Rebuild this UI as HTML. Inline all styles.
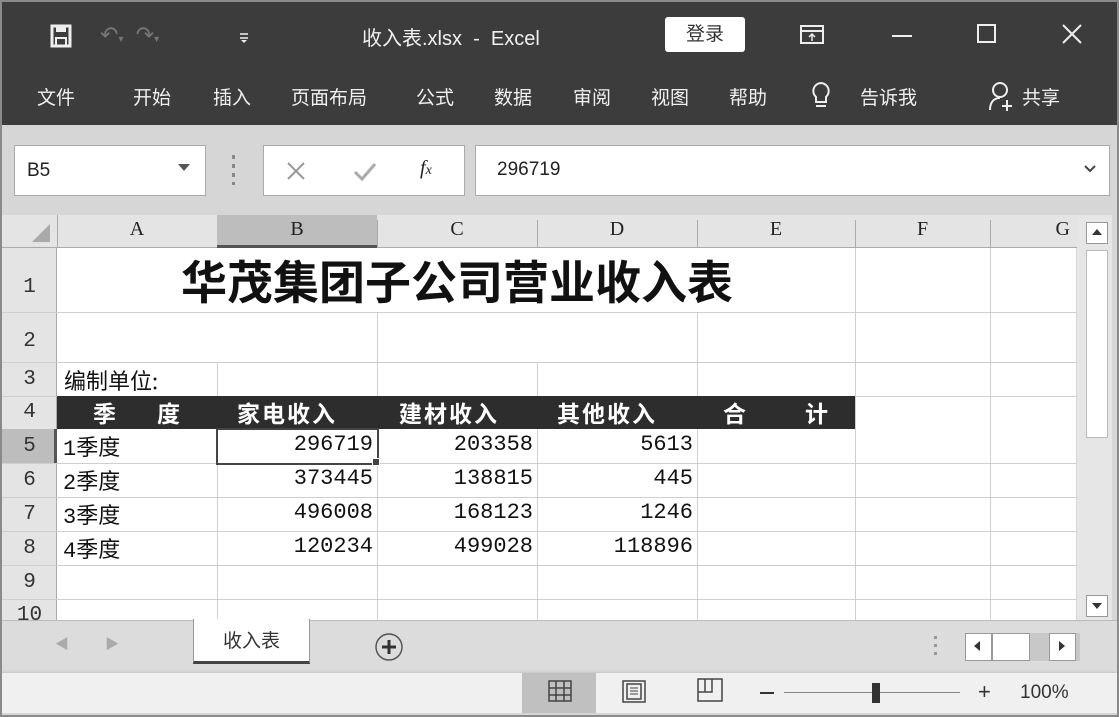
<!DOCTYPE html>
<html><head><meta charset="utf-8"><style>
*{margin:0;padding:0;box-sizing:border-box}
body{width:1119px;height:717px;overflow:hidden;background:#d6d6d6;font-family:"Liberation Sans","Noto Sans CJK SC",sans-serif;position:relative}
.a{position:absolute}
.t{color:#f0f0f0;font-size:19px}
.cell{position:absolute;font-family:"Liberation Mono","Noto Sans CJK SC",monospace;font-size:22px;color:#111}
.vl{position:absolute;width:1px;background:#cfcfcf}
.hl{position:absolute;height:1px;background:#cfcfcf}
.rh{position:absolute;left:2px;width:55px;text-align:center;font-family:"Liberation Mono",monospace;font-size:21px;color:#333}
.ch{position:absolute;top:218px;text-align:center;font-family:"Liberation Serif",serif;font-size:20px;color:#222}
</style></head><body>
<div class="a" style="left:0;top:0;width:1119px;height:717px;border:2px solid #8a8a8a"></div>
<div class="a" style="left:2px;top:2px;width:1115px;height:123px;background:#3c3c3c"></div>
<!-- title row -->
<svg class="a" style="left:50px;top:24px" width="22" height="24"><rect x="2" y="2" width="18" height="20" fill="none" stroke="#eee" stroke-width="3"/><rect x="6" y="14" width="10" height="8" fill="none" stroke="#eee" stroke-width="2"/><rect x="6" y="2" width="10" height="6" fill="#eee"/></svg>
<div class="a t" style="left:100px;top:22px;color:#777;font-size:22px">↶<span style="font-size:10px">▾</span>&nbsp;&nbsp;↷<span style="font-size:10px">▾</span></div>
<svg class="a" style="left:238px;top:30px" width="12" height="14"><path d="M2 4h8M2 8h8" stroke="#eee" stroke-width="1.5"/><path d="M3 10l3 3 3-3z" fill="#eee"/></svg>
<div class="a t" style="left:362px;top:22px;font-size:20px">收入表.xlsx&nbsp; - &nbsp;Excel</div>
<div class="a" style="left:665px;top:17px;width:80px;height:35px;background:#fff;border-radius:3px;text-align:center;font-size:19px;line-height:35px;color:#333">登录</div>
<svg class="a" style="left:800px;top:25px" width="24" height="20"><rect x="1" y="1" width="22" height="17" fill="none" stroke="#eee" stroke-width="2"/><line x1="1" y1="6" x2="23" y2="6" stroke="#eee" stroke-width="2"/><path d="M12 9v7M9 12l3-3 3 3" stroke="#eee" fill="none" stroke-width="1.5"/></svg>
<div class="a" style="left:892px;top:35px;width:20px;height:2px;background:#eee"></div>
<div class="a" style="left:977px;top:24px;width:19px;height:19px;border:2px solid #eee"></div>
<svg class="a" style="left:1062px;top:24px" width="20" height="20"><path d="M1 1L19 19M19 1L1 19" stroke="#eee" stroke-width="2"/></svg>
<!-- tabs -->
<div class="a t" style="left:37px;top:83px">文件</div>
<div class="a t" style="left:133px;top:83px">开始</div>
<div class="a t" style="left:213px;top:83px">插入</div>
<div class="a t" style="left:291px;top:83px">页面布局</div>
<div class="a t" style="left:416px;top:83px">公式</div>
<div class="a t" style="left:494px;top:83px">数据</div>
<div class="a t" style="left:573px;top:83px">审阅</div>
<div class="a t" style="left:651px;top:83px">视图</div>
<div class="a t" style="left:729px;top:83px">帮助</div>
<svg class="a" style="left:810px;top:80px" width="22" height="32"><path d="M11 3a8 8 0 0 0-5 14v5h10v-5a8 8 0 0 0-5-14z" fill="none" stroke="#eee" stroke-width="2"/><line x1="6" y1="26" x2="16" y2="26" stroke="#eee" stroke-width="2"/></svg>
<div class="a t" style="left:860px;top:83px">告诉我</div>
<svg class="a" style="left:988px;top:80px" width="28" height="32"><circle cx="12" cy="10" r="7" fill="none" stroke="#eee" stroke-width="2"/><path d="M2 30c0-8 4-12 10-12" fill="none" stroke="#eee" stroke-width="2"/><path d="M19 20v11M14 26h10" stroke="#eee" stroke-width="2"/></svg>
<div class="a t" style="left:1022px;top:83px">共享</div>
<!-- formula bar -->
<div class="a" style="left:14px;top:145px;width:192px;height:51px;background:#fff;border:1px solid #aaa"></div>
<div class="a" style="left:27px;top:160px;font-size:19px;color:#222">B5</div>
<div class="a" style="left:178px;top:164px;width:0;height:0;border-left:6px solid transparent;border-right:6px solid transparent;border-top:7px solid #555"></div>
<div class="a" style="left:232px;top:155px;width:3px;height:30px;background:repeating-linear-gradient(#888 0 4px,transparent 4px 9px)"></div>
<div class="a" style="left:263px;top:145px;width:202px;height:51px;background:#fff;border:1px solid #aaa"></div>
<svg class="a" style="left:285px;top:160px" width="22" height="22"><path d="M3 3L19 19M19 3L3 19" stroke="#999" stroke-width="2"/></svg>
<svg class="a" style="left:352px;top:160px" width="26" height="22"><path d="M3 12l7 7L23 4" stroke="#aaa" stroke-width="3" fill="none"/></svg>
<div class="a" style="left:420px;top:157px;font-family:'Liberation Serif',serif;font-style:italic;font-size:20px;color:#222">f<span style="font-size:14px">x</span></div>
<div class="a" style="left:475px;top:145px;width:635px;height:51px;background:#fff;border:1px solid #aaa"></div>
<div class="a" style="left:497px;top:159px;font-size:19px;color:#222">296719</div>
<svg class="a" style="left:1084px;top:165px" width="12" height="8"><path d="M1 1l5 5 5-5" stroke="#444" stroke-width="2" fill="none"/></svg>
<!-- grid -->
<div class="a" style="left:57px;top:248px;width:1019px;height:372px;background:#fff"></div>
<div class="a" style="left:2px;top:215px;width:1075px;height:33px;background:#e4e4e4;border-bottom:1px solid #aaa"></div>
<div class="a" style="left:2px;top:248px;width:55px;height:372px;background:#e4e4e4;border-right:1px solid #aaa"></div>
<div class="a" style="left:217px;top:215px;width:160px;height:33px;background:#bdbdbd;border-bottom:3px solid #555"></div>
<div class="a" style="left:2px;top:429px;width:55px;height:34px;background:#bdbdbd;border-right:3px solid #555"></div>
<svg class="a" style="left:30px;top:222px" width="22" height="22"><path d="M20 2V20H2z" fill="#aaa"/></svg>
<div class="ch" style="left:57px;width:160px">A</div>
<div class="ch" style="left:217px;width:160px">B</div>
<div class="ch" style="left:377px;width:160px">C</div>
<div class="ch" style="left:537px;width:160px">D</div>
<div class="ch" style="left:697px;width:158px">E</div>
<div class="ch" style="left:855px;width:135px">F</div>
<div class="ch" style="left:990px;width:80px;text-align:right">G</div>
<div class="vl" style="left:57px;top:215px;height:33px;background:#aaa"></div>
<div class="vl" style="left:377px;top:220px;height:28px;background:#aaa"></div>
<div class="vl" style="left:537px;top:220px;height:28px;background:#aaa"></div>
<div class="vl" style="left:697px;top:220px;height:28px;background:#aaa"></div>
<div class="vl" style="left:855px;top:220px;height:28px;background:#aaa"></div>
<div class="vl" style="left:990px;top:220px;height:28px;background:#aaa"></div>
<div class="vl" style="left:217px;top:362px;height:258px"></div>
<div class="vl" style="left:377px;top:312px;height:308px"></div>
<div class="vl" style="left:537px;top:362px;height:258px"></div>
<div class="vl" style="left:697px;top:312px;height:308px"></div>
<div class="vl" style="left:855px;top:248px;height:372px"></div>
<div class="vl" style="left:990px;top:248px;height:372px"></div>
<div class="hl" style="left:2px;top:312px;width:1075px"></div>
<div class="hl" style="left:2px;top:362px;width:1075px"></div>
<div class="hl" style="left:2px;top:396px;width:1075px"></div>
<div class="hl" style="left:2px;top:463px;width:1075px"></div>
<div class="hl" style="left:2px;top:497px;width:1075px"></div>
<div class="hl" style="left:2px;top:531px;width:1075px"></div>
<div class="hl" style="left:2px;top:565px;width:1075px"></div>
<div class="hl" style="left:2px;top:599px;width:1075px"></div>
<div class="rh" style="top:276px">1</div>
<div class="rh" style="top:330px">2</div>
<div class="rh" style="top:368px">3</div>
<div class="rh" style="top:401px">4</div>
<div class="rh" style="top:435px">5</div>
<div class="rh" style="top:469px">6</div>
<div class="rh" style="top:503px">7</div>
<div class="rh" style="top:537px">8</div>
<div class="rh" style="top:571px">9</div>
<div class="rh" style="top:604px;height:16px;overflow:hidden">10</div>
<!-- title -->
<div class="a" style="left:57px;top:252px;width:800px;text-align:center;font-family:'Noto Sans CJK SC',sans-serif;font-weight:bold;font-size:46px;line-height:56px;color:#111">华茂集团子公司营业收入表</div>
<div class="cell" style="left:64px;top:364px;font-family:'Noto Sans CJK SC',sans-serif">编制单位:</div>
<!-- header row -->
<div class="a" style="left:57px;top:396px;width:798px;height:33px;background:#2d2d2d"></div>
<div class="a" style="left:57px;top:394px;width:798px;height:33px;color:#fff;font-family:'Noto Sans CJK SC',sans-serif;font-weight:bold;font-size:23px;line-height:36px;letter-spacing:2px">
<span class="a" style="left:36px">季</span><span class="a" style="left:100px">度</span>
<span class="a" style="left:180px">家电收入</span><span class="a" style="left:342px">建材收入</span><span class="a" style="left:500px">其他收入</span>
<span class="a" style="left:666px">合</span><span class="a" style="left:748px">计</span></div>
<!-- data -->
<div class="cell" style="left:63px;top:430px">1季度</div>
<div class="cell" style="left:63px;top:464px">2季度</div>
<div class="cell" style="left:63px;top:498px">3季度</div>
<div class="cell" style="left:63px;top:532px">4季度</div>
<div class="cell" style="left:217px;width:156px;text-align:right;top:432px">296719</div>
<div class="cell" style="left:217px;width:156px;text-align:right;top:466px">373445</div>
<div class="cell" style="left:217px;width:156px;text-align:right;top:500px">496008</div>
<div class="cell" style="left:217px;width:156px;text-align:right;top:534px">120234</div>
<div class="cell" style="left:377px;width:156px;text-align:right;top:432px">203358</div>
<div class="cell" style="left:377px;width:156px;text-align:right;top:466px">138815</div>
<div class="cell" style="left:377px;width:156px;text-align:right;top:500px">168123</div>
<div class="cell" style="left:377px;width:156px;text-align:right;top:534px">499028</div>
<div class="cell" style="left:537px;width:156px;text-align:right;top:432px">5613</div>
<div class="cell" style="left:537px;width:156px;text-align:right;top:466px">445</div>
<div class="cell" style="left:537px;width:156px;text-align:right;top:500px">1246</div>
<div class="cell" style="left:537px;width:156px;text-align:right;top:534px">118896</div>
<div class="a" style="left:216px;top:428px;width:163px;height:37px;border:2px solid #444"></div>
<div class="a" style="left:372px;top:458px;width:8px;height:8px;background:#444;border:1px solid #fff"></div>
<!-- scrollbar -->
<div class="a" style="left:1077px;top:215px;width:35px;height:405px;background:#e6e6e6"></div>
<div class="a" style="left:1086px;top:222px;width:22px;height:22px;background:#fff;border:1px solid #999"></div>
<div class="a" style="left:1092px;top:229px;border-left:5px solid transparent;border-right:5px solid transparent;border-bottom:6px solid #333"></div>
<div class="a" style="left:1086px;top:250px;width:22px;height:188px;background:#fff;border:1px solid #bbb"></div>
<div class="a" style="left:1086px;top:595px;width:22px;height:22px;background:#fff;border:1px solid #999"></div>
<div class="a" style="left:1092px;top:603px;border-left:5px solid transparent;border-right:5px solid transparent;border-top:6px solid #333"></div>
<!-- sheet tab bar -->
<div class="a" style="left:2px;top:620px;width:1115px;height:50px;background:#dcdcdc;border-top:1px solid #bbb"></div>
<div class="a" style="left:55px;top:634px;font-size:14px;color:#aaa">◀</div>
<div class="a" style="left:105px;top:634px;font-size:14px;color:#aaa">▶</div>
<div class="a" style="left:193px;top:619px;width:117px;height:45px;background:#fff;border-left:1px solid #999;border-right:1px solid #999;border-bottom:3px solid #444;text-align:center;font-family:'Noto Sans CJK SC',sans-serif;font-size:19px;line-height:42px;color:#333">收入表</div>
<svg class="a" style="left:374px;top:632px" width="30" height="30"><circle cx="15" cy="15" r="13" fill="none" stroke="#555" stroke-width="1.5"/><path d="M15 8v14M8 15h14" stroke="#333" stroke-width="3"/></svg>
<div class="a" style="left:934px;top:636px;width:3px;height:22px;background:repeating-linear-gradient(#999 0 3px,transparent 3px 8px)"></div>
<div class="a" style="left:965px;top:633px;width:115px;height:28px;background:#c8c8c8"></div>
<div class="a" style="left:965px;top:633px;width:27px;height:28px;background:#fff;border:1px solid #999"></div>
<div class="a" style="left:974px;top:641px;border-top:5px solid transparent;border-bottom:5px solid transparent;border-right:6px solid #333"></div>
<div class="a" style="left:992px;top:633px;width:38px;height:28px;background:#fff;border:1px solid #999"></div>
<div class="a" style="left:1049px;top:633px;width:27px;height:28px;background:#fff;border:1px solid #999"></div>
<div class="a" style="left:1059px;top:641px;border-top:5px solid transparent;border-bottom:5px solid transparent;border-left:6px solid #333"></div>
<!-- status bar -->
<div class="a" style="left:2px;top:672px;width:1115px;height:41px;background:#f0f0f0;border-top:1px solid #ccc"></div>
<div class="a" style="left:522px;top:673px;width:74px;height:40px;background:#c0c0c0"></div>
<svg class="a" style="left:548px;top:680px" width="24" height="22"><rect x="1" y="1" width="22" height="20" fill="none" stroke="#444" stroke-width="1.5"/><path d="M8 1v20M16 1v20M1 8h22M1 15h22" stroke="#444" stroke-width="1.5"/></svg>
<svg class="a" style="left:622px;top:680px" width="24" height="24"><rect x="1" y="1" width="22" height="21" fill="none" stroke="#444" stroke-width="1.5"/><rect x="5" y="4" width="14" height="15" fill="none" stroke="#444" stroke-width="1.5"/><path d="M8 8h8M8 11h8M8 14h8" stroke="#444"/></svg>
<svg class="a" style="left:697px;top:678px" width="26" height="24"><path d="M1 1h24v22H1zM1 14h14V1M8 1v13" fill="none" stroke="#444" stroke-width="1.5"/></svg>
<div class="a" style="left:760px;top:692px;width:14px;height:2px;background:#333"></div>
<div class="a" style="left:784px;top:692px;width:176px;height:1px;background:#888"></div>
<div class="a" style="left:872px;top:683px;width:8px;height:20px;background:#333"></div>
<div class="a" style="left:978px;top:679px;font-size:22px;color:#333">+</div>
<div class="a" style="left:1020px;top:682px;font-size:19px;color:#333">100%</div>
</body></html>
